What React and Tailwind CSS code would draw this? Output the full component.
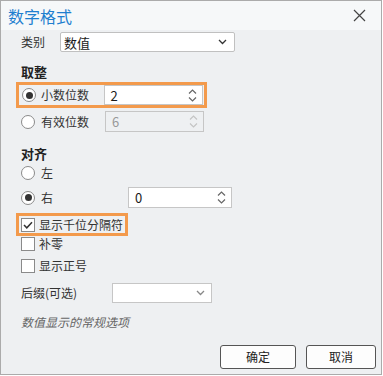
import React from "react";

const font = "font-['Noto_Sans_CJK_SC','Noto_Sans',sans-serif]";

function Chevron({ className = "" }) {
  return (
    <svg width="9" height="6" viewBox="0 0 9 6" className={className}>
      <path d="M1 1l3.5 3.5L8 1" fill="none" stroke="currentColor" strokeWidth="1.3" />
    </svg>
  );
}

function Spinner({ disabled }) {
  const color = disabled ? "text-[#c4c4c4]" : "text-[#666]";
  return (
    <div className={`flex flex-col items-center gap-[3px] ${color}`}>
      <svg width="9" height="5" viewBox="0 0 9 5">
        <path d="M1 4.5l3.5-3.5L8 4.5" fill="none" stroke="currentColor" strokeWidth="1.2" />
      </svg>
      <svg width="9" height="5" viewBox="0 0 9 5">
        <path d="M1 0.5l3.5 3.5L8 0.5" fill="none" stroke="currentColor" strokeWidth="1.2" />
      </svg>
    </div>
  );
}

function Radio({ checked }) {
  return (
    <span className="w-[14px] h-[14px] rounded-full border border-[#8a8a8a] bg-white flex items-center justify-center shrink-0">
      {checked && <span className="w-[7px] h-[7px] rounded-full bg-[#333]" />}
    </span>
  );
}

function Checkbox({ checked }) {
  return (
    <span className="w-[14px] h-[14px] border border-[#8a8a8a] bg-white flex items-center justify-center shrink-0">
      {checked && (
        <svg width="10" height="8" viewBox="0 0 10 8">
          <path d="M1 4l2.8 2.8L9 1.2" fill="none" stroke="#333" strokeWidth="1.5" />
        </svg>
      )}
    </span>
  );
}

function NumberBox({ value, disabled, className = "" }) {
  return (
    <div
      className={`flex items-center justify-between pl-[6px] pr-[5px] border ${
        disabled ? "bg-[#eef0f2] border-[#c6c6c6] text-[#999]" : "bg-white border-[#c6c6c6] text-[#1a1a1a]"
      } ${className}`}
    >
      <span className="text-[13px] leading-none">{value}</span>
      <Spinner disabled={disabled} />
    </div>
  );
}

export default function App() {
  return (
    <div className={`w-[382px] h-[375px] border border-[#ababab] bg-[#eef0f2] flex flex-col text-[12px] text-[#333] ${font}`}>
      <div className="h-[29px] bg-[#f6f8f9] flex items-center justify-between pl-[7px] pr-[15px]">
        <span className="text-[16px] leading-none text-[#1f7fcf]">数字格式</span>
        <svg width="13" height="13" viewBox="0 0 13 13">
          <path d="M1 1l11 11M12 1L1 12" stroke="#444" strokeWidth="1.2" />
        </svg>
      </div>

      <div className="flex flex-col pl-[20px]">
        <div className="mt-[2px] h-[20px] flex items-center">
          <span className="w-[39px] leading-none">类别</span>
          <div className="w-[175px] h-[20px] bg-white border border-[#c0c0c0] rounded-[2px] flex items-center justify-between pl-[3px] pr-[7px]">
            <span className="text-[13px] leading-none text-[#1a1a1a]">数值</span>
            <Chevron className="text-[#333]" />
          </div>
        </div>

        <div className="mt-[10px] h-[18px] flex items-center text-[13px] font-bold text-[#222] leading-none">取整</div>

        <div className="mt-[2px] -ml-[5px] w-[191px] h-[26px] border-[3px] border-[#f39a4c] flex items-center pr-[1px]">
          <span className="pl-[3px]"><Radio checked /></span>
          <span className="ml-[5px] w-[63px] leading-none">小数位数</span>
          <NumberBox value="2" className="w-[100px] h-[20px]" />
        </div>

        <div className="mt-[3px] h-[21px] flex items-center">
          <Radio />
          <span className="ml-[6px] w-[64px] leading-none">有效位数</span>
          <NumberBox value="6" disabled className="w-[99px] h-[21px]" />
        </div>

        <div className="mt-[12px] h-[18px] flex items-center text-[13px] font-bold text-[#222] leading-none">对齐</div>

        <div className="mt-[2px] h-[18px] flex items-center">
          <Radio />
          <span className="ml-[6px] leading-none">左</span>
        </div>

        <div className="mt-[5px] h-[21px] flex items-center">
          <Radio checked />
          <span className="ml-[6px] w-[87px] leading-none">右</span>
          <NumberBox value="0" className="w-[104px] h-[21px]" />
        </div>

        <div className="mt-[5px] -ml-[5px] w-[112px] h-[23px] border-[3px] border-[#f39a4c] flex items-center">
          <span className="pl-[2px]"><Checkbox checked /></span>
          <span className="ml-[4px] leading-none">显示千位分隔符</span>
        </div>

        <div className="mt-[1px] h-[14px] flex items-center">
          <Checkbox />
          <span className="ml-[4px] leading-none">补零</span>
        </div>

        <div className="mt-[8px] h-[14px] flex items-center">
          <Checkbox />
          <span className="ml-[4px] leading-none">显示正号</span>
        </div>

        <div className="mt-[10px] h-[20px] flex items-center">
          <span className="w-[91px] leading-none">后缀(可选)</span>
          <div className="w-[100px] h-[20px] bg-white border border-[#c6c6c6] flex items-center justify-end pr-[6px]">
            <Chevron className="text-[#888]" />
          </div>
        </div>

        <div className="mt-[10px] h-[18px] flex items-center italic text-[#666] leading-none">数值显示的常规选项</div>

        <div className="mt-[14px] flex justify-end gap-[10px] pr-[5px]">
          <button className="w-[76px] h-[24px] bg-[#fdfdfd] border border-[#555] rounded-[3px] text-[12px] text-[#222] leading-none">确定</button>
          <button className="w-[70px] h-[24px] bg-[#fdfdfd] border border-[#555] rounded-[3px] text-[12px] text-[#222] leading-none">取消</button>
        </div>
      </div>
    </div>
  );
}
